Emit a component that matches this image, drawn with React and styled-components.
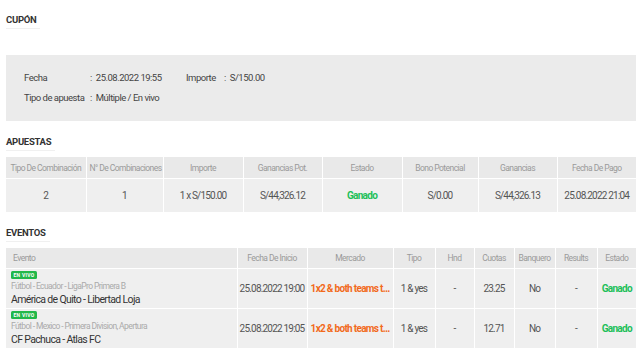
import React from 'react';
import styled, { createGlobalStyle } from 'styled-components';

const GlobalStyle = createGlobalStyle`
  body {
    margin: 0;
    background: #fff;
    font-family: Roboto, "Liberation Sans", Arial, sans-serif;
  }
`;

const Page = styled.div`
  width: 630px;
  padding: 0 4px 0 6px;
`;

const Section = styled.div`
  padding-top: ${(props) => props.top || 0}px;
`;

const SectionTitle = styled.div`
  display: block;
  width: fit-content;
  font-size: 9.5px;
  font-weight: 700;
  color: #333;
  line-height: 12px;
  letter-spacing: -0.3px;
  padding-bottom: 2px;
  padding-right: 4px;
  border-bottom: 1px solid #f0f0f0;
`;

const CouponBox = styled.div`
  margin-top: 26px;
  height: 66px;
  box-sizing: border-box;
  background: #ebebeb;
  padding: 12px 18px;
  display: flex;
  flex-direction: column;
`;

const CouponRow = styled.div`
  display: flex;
  align-items: center;
  height: 20px;
  font-size: 9.5px;
  color: #444;
  letter-spacing: -0.5px;
`;

const Label = styled.span`
  width: ${(props) => props.w}px;
  flex-shrink: 0;
`;

const Value = styled.span`
  width: ${(props) => props.w || 'auto'};
  flex-shrink: 0;
`;

const Colon = styled.span`
  margin-right: 4px;
`;

const Table = styled.table`
  margin-top: 6px;
  width: 630px;
  table-layout: fixed;
  border-collapse: collapse;
`;

const Th = styled.th`
  background: #e9e9e9;
  border: 1px solid #fff;
  border-top: none;
  height: ${(props) => props.h || 20}px;
  padding: 0 3px;
  font-size: 8.5px;
  font-weight: 400;
  color: #9a9a9a;
  letter-spacing: -0.55px;
  text-align: ${(props) => (props.left ? 'left' : 'center')};
  padding-left: ${(props) => (props.left ? 7 : 3)}px;
  white-space: nowrap;
  overflow: hidden;
  &:first-child { border-left: none; }
  &:last-child { border-right: none; }
`;

const Td = styled.td`
  background: #efefef;
  border: 1px solid #fff;
  height: ${(props) => props.h || 33}px;
  padding: 0 2px;
  font-size: 10px;
  color: ${(props) => props.color || '#555'};
  font-weight: ${(props) => (props.bold ? 700 : 400)};
  letter-spacing: ${(props) => (props.bold ? -0.7 : -0.8)}px;
  text-align: ${(props) => (props.left ? 'left' : 'center')};
  white-space: nowrap;
  overflow: hidden;
  text-overflow: ellipsis;
  &:first-child { border-left: none; }
  &:last-child { border-right: none; }
`;

const EventCell = styled.div`
  display: flex;
  flex-direction: column;
  align-items: flex-start;
  padding-left: 3px;
`;

const LiveBadge = styled.span`
  display: inline-block;
  background: #22b84a;
  color: #fff;
  font-size: 5px;
  font-weight: 700;
  line-height: 8px;
  padding: 0 2.5px;
  border-radius: 1.5px;
  letter-spacing: 0.3px;
`;

const EventMeta = styled.span`
  margin-top: 1px;
  font-size: 8.5px;
  color: #aaa;
  line-height: 12px;
  letter-spacing: -0.6px;
`;

const EventName = styled.span`
  margin-top: 1px;
  font-size: 10.5px;
  color: #333;
  line-height: 13px;
  letter-spacing: -0.65px;
`;

const GREEN = '#1dbf5a';
const ORANGE = '#f26a1b';

const apuestaCols = [
  ['Tipo De Combinación', 80],
  ['N° De Combinaciones', 77],
  ['Importe', 80],
  ['Ganancias Pot.', 79],
  ['Estado', 80],
  ['Bono Potencial', 76],
  ['Ganancias', 79],
  ['Fecha De Pago', 79],
];

const eventCols = [
  ['Evento', 231],
  ['Fecha De Inicio', 70],
  ['Mercado', 86],
  ['Tipo', 42],
  ['Hnd', 39],
  ['Cuotas', 40],
  ['Banquero', 41],
  ['Results', 42],
  ['Estado', 39],
];

const events = [
  {
    id: 1,
    meta: 'Fútbol - Ecuador - LigaPro Primera B',
    name: 'América de Quito - Libertad Loja',
    date: '25.08.2022 19:00',
    odds: '23.25',
  },
  {
    id: 2,
    meta: 'Fútbol - Mexico - Primera Division, Apertura',
    name: 'CF Pachuca - Atlas FC',
    date: '25.08.2022 19:05',
    odds: '12.71',
  },
];

const App = () => {
  return (
    <>
      <GlobalStyle />
      <Page>
        <Section top={14}>
          <SectionTitle>CUPÓN</SectionTitle>
          <CouponBox>
            <CouponRow>
              <Label w={66}>Fecha</Label>
              <Value w="96px"><Colon>:</Colon>25.08.2022 19:55</Value>
              <Label w={38}>Importe</Label>
              <Value><Colon>:</Colon>S/150.00</Value>
            </CouponRow>
            <CouponRow>
              <Label w={66}>Tipo de apuesta</Label>
              <Value><Colon>:</Colon>Múltiple / En vivo</Value>
            </CouponRow>
          </CouponBox>
        </Section>

        <Section top={15}>
          <SectionTitle>APUESTAS</SectionTitle>
          <Table>
            <colgroup>
              {apuestaCols.map(([name, w]) => (
                <col key={name} style={{ width: w }} />
              ))}
            </colgroup>
            <thead>
              <tr>
                {apuestaCols.map(([name]) => (
                  <Th key={name} h={21}>{name}</Th>
                ))}
              </tr>
            </thead>
            <tbody>
              <tr>
                <Td>2</Td>
                <Td>1</Td>
                <Td>1 x S/150.00</Td>
                <Td>S/44,326.12</Td>
                <Td color={GREEN} bold>Ganado</Td>
                <Td>S/0.00</Td>
                <Td>S/44,326.13</Td>
                <Td>25.08.2022 21:04</Td>
              </tr>
            </tbody>
          </Table>
        </Section>

        <Section top={14}>
          <SectionTitle>EVENTOS</SectionTitle>
          <Table>
            <colgroup>
              {eventCols.map(([name, w]) => (
                <col key={name} style={{ width: w }} />
              ))}
            </colgroup>
            <thead>
              <tr>
                {eventCols.map(([name], i) => (
                  <Th key={name} left={i === 0}>{name}</Th>
                ))}
              </tr>
            </thead>
            <tbody>
              {events.map((ev) => (
                <tr key={ev.id}>
                  <Td left h={39}>
                    <EventCell>
                      <LiveBadge>EN VIVO</LiveBadge>
                      <EventMeta>{ev.meta}</EventMeta>
                      <EventName>{ev.name}</EventName>
                    </EventCell>
                  </Td>
                  <Td h={39}>{ev.date}</Td>
                  <Td h={39} color={ORANGE} bold>1x2 &amp; both teams t…</Td>
                  <Td h={39}>1 &amp; yes</Td>
                  <Td h={39}>-</Td>
                  <Td h={39}>{ev.odds}</Td>
                  <Td h={39}>No</Td>
                  <Td h={39}>-</Td>
                  <Td h={39} color={GREEN} bold>Ganado</Td>
                </tr>
              ))}
            </tbody>
          </Table>
        </Section>
      </Page>
    </>
  );
};

export default App;
